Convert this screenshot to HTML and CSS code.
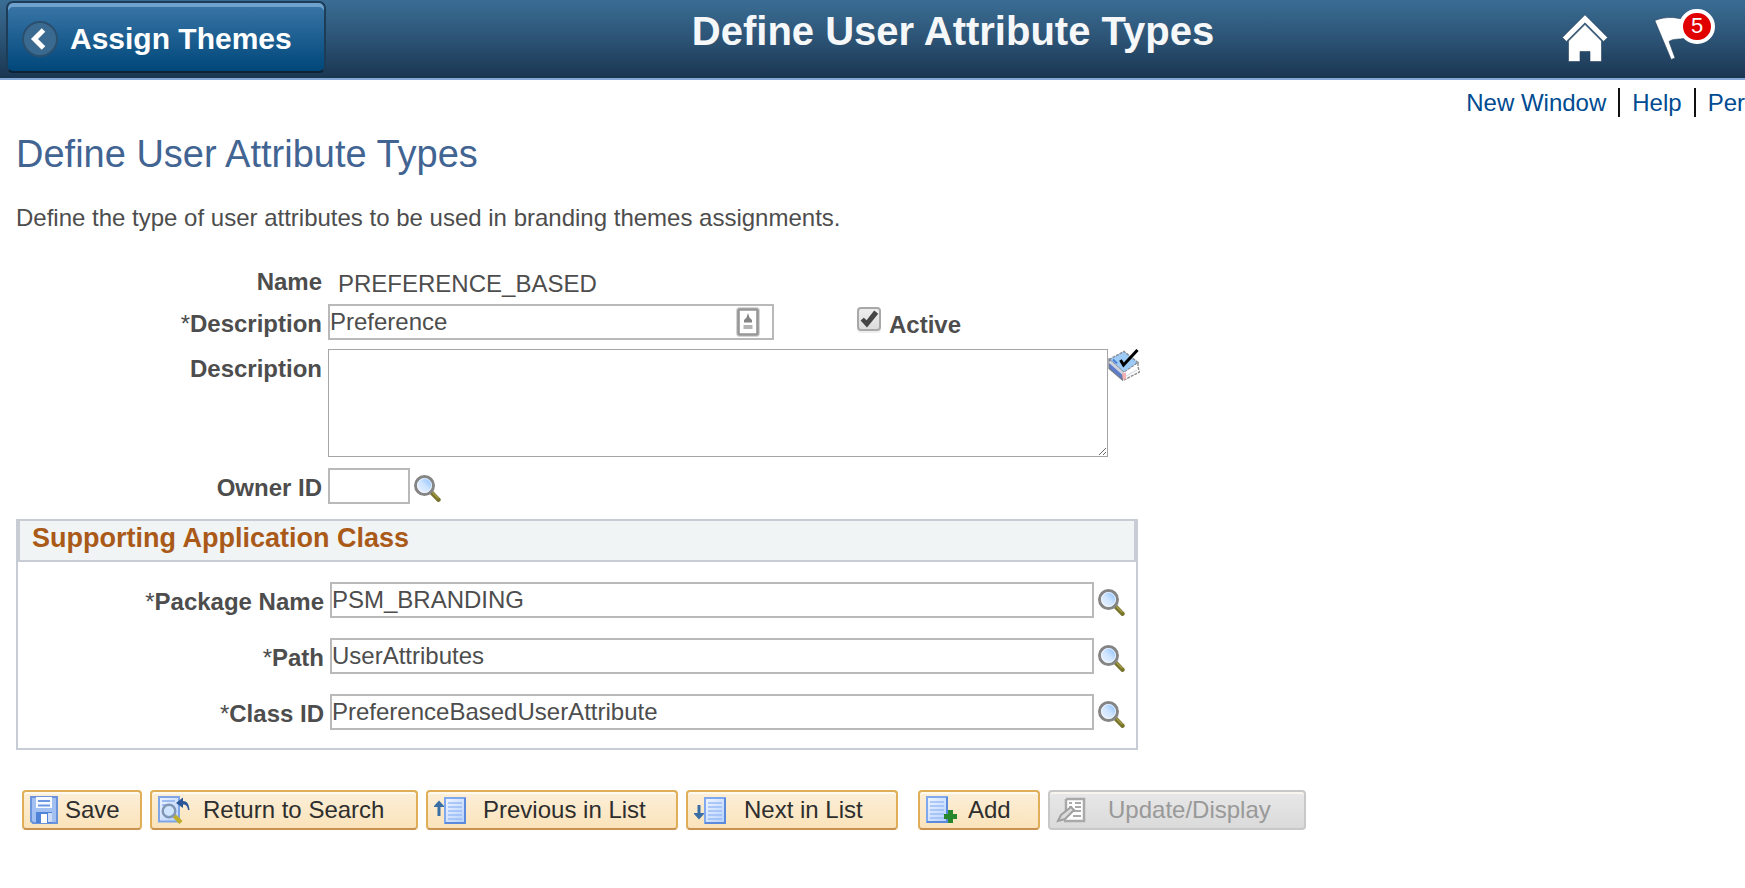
FILE: index.html
```html
<!DOCTYPE html>
<html lang="en">
<head>
<meta charset="utf-8">
<title>Define User Attribute Types</title>
<link rel="stylesheet" href="styles.css">
</head>
<body>
<svg class="defs" width="0" height="0" aria-hidden="true">
  <defs>
    <linearGradient id="lens" x1="1" y1="0" x2="0" y2="1">
      <stop offset="0" stop-color="#6fb2ff"/><stop offset=".5" stop-color="#cfe4ff"/><stop offset="1" stop-color="#f2f7ff"/>
    </linearGradient>
    <linearGradient id="sheet" x1="0" y1="0" x2="1" y2="1">
      <stop offset="0" stop-color="#f0f5ff"/><stop offset="1" stop-color="#b4d0fc"/>
    </linearGradient>
    <symbol id="lookup" viewBox="0 0 27 27">
      <path d="M17.500 17.500l7 7.200" stroke="#77732c" stroke-width="4.400" stroke-linecap="round"/>
      <path d="M18 17l6.500 6.500" stroke="#a29b45" stroke-width="1.500"/>
      <circle cx="10.500" cy="10.500" r="9" fill="url(#lens)" stroke="#858585" stroke-width="3"/>
      <circle cx="10.500" cy="10.500" r="7" fill="none" stroke="#fff" stroke-width="1" opacity=".7"/>
    </symbol>
    <symbol id="list" viewBox="0 0 22 27">
      <path d="M1 1h20v25H1z" fill="url(#sheet)" stroke="#7fa8ee" stroke-width="2"/>
      <path d="M21 1v25H1" fill="none" stroke="#5c8bde" stroke-width="2"/>
      <path d="M4 6h14M4 10h14M4 14h14M4 18h14M4 22h14" stroke="#9bbcf5" stroke-width="1.600"/>
    </symbol>
  </defs>
</svg>

<header class="banner">
  <button class="back" type="button">
    <svg width="36" height="36" viewBox="0 0 36 36" aria-hidden="true">
      <circle cx="18" cy="18" r="17" fill="#3a6a8f" stroke="#2b4f6e" stroke-width="2"/>
      <path d="M21.500 9L12.500 18l9 9" fill="none" stroke="#fff" stroke-width="5"/>
    </svg>
    <span>Assign Themes</span>
  </button>
  <div class="banner-title">Define User Attribute Types</div>
  <div class="banner-actions">
    <button class="icon-btn" type="button" aria-label="Home">
      <svg width="46" height="48" viewBox="0 0 46 48" aria-hidden="true">
        <g fill="#fff" stroke="#24405a" stroke-width=".6">
          <path d="M23 .8L.4 23.400l4 4L23 8.800l18.600 18.600 4-4z"/>
          <path d="M23 10.500L6.500 27V47.500H18V37.500h10V47.500H39.500V27z"/>
        </g>
      </svg>
    </button>
    <button class="icon-btn flag" type="button" aria-label="Notifications">
      <svg width="32" height="46" viewBox="0 0 32 46" aria-hidden="true">
        <path d="M.8 5.500C7 3 12 2.500 18 2.500c5 0 8 2 13 1v19.500c-6 2-11 0-16 3.500L21 43l-3.800 1.500z" fill="#fff" stroke="#24405a" stroke-width=".6"/>
      </svg>
      <span class="count">5</span>
    </button>
  </div>
</header>

<nav class="page-links">
  <a href="#">New Window</a>
  <a href="#">Help</a>
  <a href="#">Per</a>
</nav>

<main class="page">
  <h1>Define User Attribute Types</h1>
  <p class="intro">Define the type of user attributes to be used in branding themes assignments.</p>

  <form class="form">
    <div class="row name-row">
      <span class="label">Name</span>
      <span class="value">PREFERENCE_BASED</span>
    </div>
    <div class="row">
      <label class="label" for="descr"><span class="req">*</span>Description</label>
      <div class="control">
        <div class="autofill">
          <input class="text" id="descr" type="text" value="Preference">
          <svg class="autofill-icon" width="24" height="30" viewBox="0 0 24 30" aria-hidden="true">
            <rect x="2" y="2" width="20" height="26" rx="2" fill="#fff" stroke="#d5d5d5" stroke-width="4"/>
            <rect x="2.500" y="2.500" width="19" height="25" rx="1" fill="#fff" stroke="#969696" stroke-width="2.600"/>
            <path d="M12 6l1.500 4.500L16 13v2.500H8V13l2.500-2.500z" fill="#858585"/>
            <path d="M7.500 18h9v4h-9z" fill="#b4b4b4"/>
          </svg>
        </div>
        <label class="active"><input type="checkbox" checked><span>Active</span></label>
      </div>
    </div>
    <div class="row long-row">
      <label class="label" for="long">Description</label>
      <div class="control">
        <textarea id="long"></textarea>
        <button class="icon-btn" type="button" aria-label="Spell check">
          <svg width="32" height="32" viewBox="0 0 32 32" aria-hidden="true">
            <path d="M1 10.500L16 2.500l14 11-14 10z" fill="#9ccbf7" stroke="#8a8f98" stroke-width="1.500" stroke-dasharray="3 1"/>
            <path d="M1 10.500v9L14.500 31v-8z" fill="#5b7cc9" stroke="#777d8c" stroke-width="1.300"/>
            <path d="M1.500 12.500L15 24.500" stroke="#cfd3de" stroke-width="3"/>
            <path d="M15.500 24L30 14.500l1.500 8.500L16 31z" fill="#fff"/>
            <path d="M30 14v4l1.500 5L16 31" fill="none" stroke="#8a8a8a" stroke-width="1.400" stroke-dasharray="3 1"/>
            <path d="M14 24.500l4-1v6.500l-3 1z" fill="#f3b1b1"/>
            <path d="M18 27l11-6" stroke="#ccd6e6" stroke-width="1"/>
            <path d="M5 10.500l4 4" stroke="#4f7fd4" stroke-width="2"/>
            <path d="M12.500 11l3 5L29.500 1" fill="none" stroke="#000" stroke-width="3"/>
          </svg>
        </button>
      </div>
    </div>
    <div class="row owner-row">
      <label class="label" for="owner">Owner ID</label>
      <div class="control lookup">
        <input class="text short" id="owner" type="text">
        <button class="icon-btn" type="button" aria-label="Look up Owner ID"><svg width="27" height="27"><use href="#lookup"/></svg></button>
      </div>
    </div>

    <section class="group">
      <h2>Supporting Application Class</h2>
      <div class="group-body">
        <div class="row">
          <label class="label" for="pkg"><span class="req">*</span>Package Name</label>
          <div class="control lookup">
            <input class="text" id="pkg" type="text" value="PSM_BRANDING">
            <button class="icon-btn" type="button" aria-label="Look up Package Name"><svg width="27" height="27"><use href="#lookup"/></svg></button>
          </div>
        </div>
        <div class="row">
          <label class="label" for="path"><span class="req">*</span>Path</label>
          <div class="control lookup">
            <input class="text" id="path" type="text" value="UserAttributes">
            <button class="icon-btn" type="button" aria-label="Look up Path"><svg width="27" height="27"><use href="#lookup"/></svg></button>
          </div>
        </div>
        <div class="row">
          <label class="label" for="cls"><span class="req">*</span>Class ID</label>
          <div class="control lookup">
            <input class="text" id="cls" type="text" value="PreferenceBasedUserAttribute">
            <button class="icon-btn" type="button" aria-label="Look up Class ID"><svg width="27" height="27"><use href="#lookup"/></svg></button>
          </div>
        </div>
      </div>
    </section>
  </form>

  <div class="toolbar">
    <button class="btn save" type="button">
      <svg width="28" height="28" viewBox="0 0 28 28" aria-hidden="true">
        <path d="M1 1h26v26H3l-2-2z" fill="#a3c0f2" stroke="#6b93dc" stroke-width="2"/>
        <path d="M6 1h16v11H6z" fill="#f6f9ff"/>
        <path d="M8 5h12M8 9.500h12" stroke="#6d97e3" stroke-width="2"/>
        <path d="M6 16h16v11H6z" fill="#4f83d8"/>
        <path d="M11 18h6v9h-6z" fill="#fff"/>
        <path d="M18 17h4v9h-4z" fill="#cfdcf5"/>
      </svg>
      <span>Save</span>
    </button>
    <button class="btn return" type="button">
      <svg width="32" height="28" viewBox="0 0 32 28" aria-hidden="true">
        <path d="M1 1h20v24.500H1z" fill="url(#sheet)" stroke="#7fa5e8" stroke-width="2"/>
        <path d="M4 5h13M4 9h6" stroke="#9dbcf3" stroke-width="2"/>
        <path d="M16 19.500l7 7" stroke="#bfae2c" stroke-width="4.500"/>
        <circle cx="11" cy="15" r="6.300" fill="#cfe4ff" stroke="#7f97b5" stroke-width="2.400"/>
        <path d="M18 7l7-5.500V5c4 0 6 3 6.500 9h-1.500c-.5-4-2-5.500-5-5.500V12z" fill="#2c5597"/>
      </svg>
      <span>Return to Search</span>
    </button>
    <button class="btn prev" type="button">
      <svg width="32" height="27" viewBox="0 0 32 27" aria-hidden="true">
        <path d="M0 9l5-5.500L10 9v1H6.500v9h-3v-9H0z" fill="#3a6ea5"/>
        <use href="#list" x="10" y="0" width="22" height="27"/>
      </svg>
      <span>Previous in List</span>
    </button>
    <button class="btn next" type="button">
      <svg width="32" height="27" viewBox="0 0 32 27" aria-hidden="true">
        <path d="M0 17l5 5.500 5-5.500v-1H6.500V8h-3v8H0z" fill="#3a6ea5"/>
        <use href="#list" x="10" y="0" width="22" height="27"/>
      </svg>
      <span>Next in List</span>
    </button>
    <button class="btn add" type="button">
      <svg width="32" height="28" viewBox="0 0 32 28" aria-hidden="true">
        <use href="#list" x="0" y="0" width="22" height="27"/>
        <path d="M22 14h5v4h4v5h-4v4h-5v-4h-4v-5h4z" fill="#26872c"/>
      </svg>
      <span>Add</span>
    </button>
    <button class="btn update" type="button" disabled>
      <svg width="30" height="26" viewBox="0 0 30 26" aria-hidden="true">
        <path d="M10 2h18v22H8" fill="#fff" stroke="#a9a9a9" stroke-width="2.500"/>
        <path d="M10 2v14" stroke="#a9a9a9" stroke-width="2.500"/>
        <path d="M13 6h3m3 0h6M13 10h3m3 0h6M17 14h8M17 19h8" stroke="#a9a9a9" stroke-width="2"/>
        <path d="M2 24l3-6L15 10l3 3-9 9z" fill="#dcdcdc" stroke="#a0a0a0" stroke-width="2"/>
      </svg>
      <span>Update/Display</span>
    </button>
  </div>
</main>
</body>
</html>
```

FILE: styles.css
```css
* {
  box-sizing: border-box;
}

body {
  margin: 0;
  background: #fff;
  color: #4d4d4d;
  font: 24px/28px "Liberation Sans", Arial, sans-serif;
}

button,
input,
textarea {
  font: inherit;
  color: inherit;
  margin: 0;
}

.defs {
  position: absolute;
}

.banner {
  display: flex;
  align-items: flex-start;
  gap: 16px;
  height: 80px;
  padding: 1px 30px 0 6px;
  background: linear-gradient(#3a6d94, #2c5375 50%, #1a3651);
  border-bottom: 2px solid #84a9d6;
}

.back {
  display: flex;
  align-items: center;
  gap: 12px;
  width: 320px;
  height: 72px;
  padding: 3px 14px 0;
  border: 2px solid #1d3c58;
  border-bottom-color: #0f2337;
  border-radius: 7px;
  background: linear-gradient(#3b77a8, #00477a);
  box-shadow: inset 0 4px 0 #6fa3cd;
  color: #fff;
  font-size: 30px;
  font-weight: bold;
  line-height: 36px;
}

.banner-title {
  flex: 1;
  padding: 7px 0 0 18px;
  color: #f5f7f9;
  font-size: 40px;
  font-weight: bold;
  line-height: 46px;
  text-align: center;
}

.banner-actions {
  display: flex;
  gap: 46px;
  padding-top: 13px;
}

.icon-btn {
  display: block;
  flex: none;
  padding: 0;
  border: 0;
  background: none;
}

.icon-btn svg {
  display: block;
}

.flag {
  position: relative;
  width: 61px;
}

.count {
  position: absolute;
  top: -5px;
  right: 0;
  width: 36px;
  height: 35px;
  border: 4px solid #fff;
  border-radius: 18px;
  background: #e00000;
  color: #fff;
  font-size: 22px;
  line-height: 26px;
}

.page-links {
  display: flex;
  justify-content: flex-end;
  padding-top: 8px;
}

.page-links a {
  padding: 1px 12px 0;
  color: #004b91;
  text-decoration: none;
}

.page-links a + a {
  border-left: 2px solid #111;
}

.page-links a:last-child {
  padding-right: 0;
}

.page {
  padding: 0 16px;
}

h1 {
  margin: 15px 0 28px;
  color: #426492;
  font-size: 38px;
  font-weight: normal;
  line-height: 44px;
}

.intro {
  margin: 0 0 36px;
}

.form {
  max-width: 1124px;
}

.row {
  display: grid;
  grid-template-columns: 306px 1fr;
  column-gap: 6px;
}

.label {
  padding-top: 6px;
  font-weight: bold;
  text-align: right;
}

.req {
  font-weight: normal;
}

.name-row {
  min-height: 36px;
}

.name-row .label {
  padding-top: 0;
}

.value {
  padding: 2px 0 0 10px;
}

.long-row {
  margin: 9px 0 11px;
}

.control {
  display: flex;
  align-items: flex-start;
}

.lookup {
  gap: 4px;
}

.lookup .icon-btn {
  padding-top: 7px;
}

.text {
  flex: 1;
  width: 100%;
  min-width: 0;
  height: 36px;
  padding: 0;
  border: 2px solid #b9b9b9;
  background: #fff;
}

.short {
  flex: none;
  width: 82px;
}

.autofill {
  display: flex;
  position: relative;
  width: 446px;
}

.autofill-icon {
  position: absolute;
  top: 3px;
  right: 14px;
}

.active {
  display: flex;
  gap: 8px;
  margin-left: 83px;
  padding-top: 3px;
  font-weight: bold;
}

.active span {
  padding-top: 4px;
}

.active input {
  appearance: none;
  width: 24px;
  height: 24px;
  border: 2px solid #a8a8a8;
  border-radius: 4px;
  background: linear-gradient(#ededed, #dcdcdc);
  box-shadow: 0 2px 0 #eee;
}

.active input:checked::before {
  content: "";
  display: block;
  width: 20px;
  height: 20px;
  background: #444;
  clip-path: polygon(8% 58%, 24% 44%, 38% 56%, 76% 8%, 96% 24%, 40% 92%);
}

textarea {
  display: block;
  flex: 1;
  height: 108px;
  padding: 2px;
  border: 1px solid #a5a5a5;
  background: #fff;
}

.group {
  margin: 15px 2px 0 0;
  border: 2px solid #c8ccd4;
}

h2 {
  margin: 0;
  padding: 1px 12px 6px;
  border: solid #c8ccd4;
  border-width: 0 2px 2px;
  background: #f0f4f5;
  color: #aa5a18;
  font-size: 27px;
  line-height: 32px;
}

.group-body {
  display: grid;
  gap: 20px;
  padding: 20px 11px 18px 0;
}

.toolbar {
  display: flex;
  gap: 8px;
  padding: 40px 6px;
}

.btn {
  display: flex;
  align-items: center;
  gap: 18px;
  height: 40px;
  padding: 0 6px;
  border: 2px solid #e0ae58;
  border-bottom-color: #c9924e;
  border-radius: 4px;
  background: linear-gradient(#fcefd9, #fae3ba);
  box-shadow: inset 0 2px 0 #fffaf0;
  color: #2e2e2e;
  white-space: nowrap;
}

.save {
  gap: 7px;
  width: 120px;
}

.return {
  gap: 13px;
  width: 268px;
}

.prev {
  gap: 17px;
  width: 252px;
}

.next {
  width: 212px;
}

.add {
  gap: 10px;
  width: 122px;
  margin-left: 12px;
}

.update {
  gap: 22px;
  width: 258px;
  border-color: #c8c8c8;
  background: linear-gradient(#e8e8e8, #dadada);
  box-shadow: inset 0 2px 0 #f8f5ee;
  color: #999;
}
```
